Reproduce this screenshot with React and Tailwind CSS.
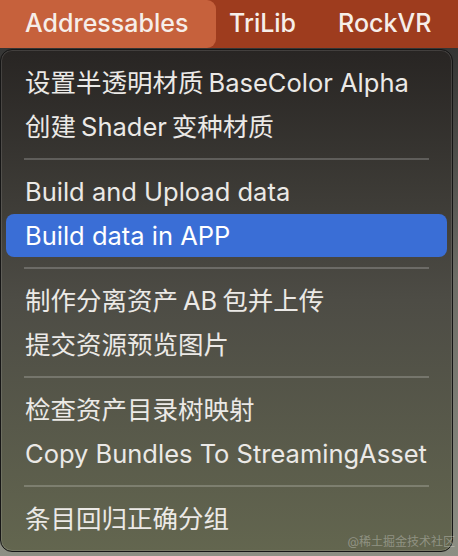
import React from "react";

const font = {
  fontFamily: "Inter, 'Noto Sans CJK SC', 'Noto Sans', sans-serif",
};

const groups = [
  ["设置半透明材质BaseColor Alpha", "创建Shader变种材质"],
  ["Build and Upload data", "Build data in APP"],
  ["制作分离资产AB包并上传", "提交资源预览图片"],
  ["检查资产目录树映射", "Copy Bundles To StreamingAsset"],
  ["条目回归正确分组"],
];

// latin runs inside chinese text get a little air on each side, like the mac menu does
const renderLabel = (label) => {
  const parts = label.split(/([A-Za-z][A-Za-z ]*)/).filter(Boolean);
  if (parts.length === 1) return label;
  return parts.map((p, i) =>
    /[A-Za-z]/.test(p) ? (
      <span key={i} className="mx-[5px]">
        {p}
      </span>
    ) : (
      <span key={i}>{p}</span>
    )
  );
};

const MenuItem = ({ label, active }) => (
  <div
    className={
      "flex h-[43.5px] items-center rounded-[8px] px-[19px] text-[25.5px] leading-none " +
      (active ? "bg-[#3a6ed6] text-white" : "text-[#ebe9e6]")
    }
  >
    <span className="whitespace-pre">{renderLabel(label)}</span>
  </div>
);

const Separator = () => (
  <div className="flex h-[22px] items-center px-[18px]">
    <div className="h-[2px] w-full bg-white/20" />
  </div>
);

export default function App() {
  return (
    <div
      className="relative flex h-[556px] w-[458px] flex-col overflow-hidden bg-gradient-to-b from-[#2a2a2a] via-[#6d6d66] to-[#8d8f84]"
      style={font}
    >
      {/* menu bar */}
      <div className="flex h-[48px] shrink-0 items-stretch bg-[#9e3c1e] text-[25px] font-medium text-[#f6eee9]">
        <div className="flex w-[216px] items-center rounded-r-[9px] bg-[#c6613c] pl-[25px]">
          Addressables
        </div>
        <div className="flex items-center pl-[13px]">TriLib</div>
        <div className="flex items-center pl-[42px]">RockVR</div>
      </div>

      {/* dropdown */}
      <div className="mt-[1px] w-[453px] rounded-[12px] border border-[#161616] bg-gradient-to-b from-[#282523] via-[#4d4c45] to-[#63664f] px-[5px] pt-[11px] pb-[10px] shadow-[inset_0_0_0_1px_rgba(255,255,255,0.12)]">
        {groups.map((items, gi) => (
          <div key={gi}>
            {gi > 0 && <Separator />}
            {items.map((label) => (
              <MenuItem
                key={label}
                label={label}
                active={label === "Build data in APP"}
              />
            ))}
          </div>
        ))}
      </div>

      <div className="absolute right-[3px] bottom-[5px] text-[12px] text-white/30">
        @稀土掘金技术社区
      </div>
    </div>
  );
}
